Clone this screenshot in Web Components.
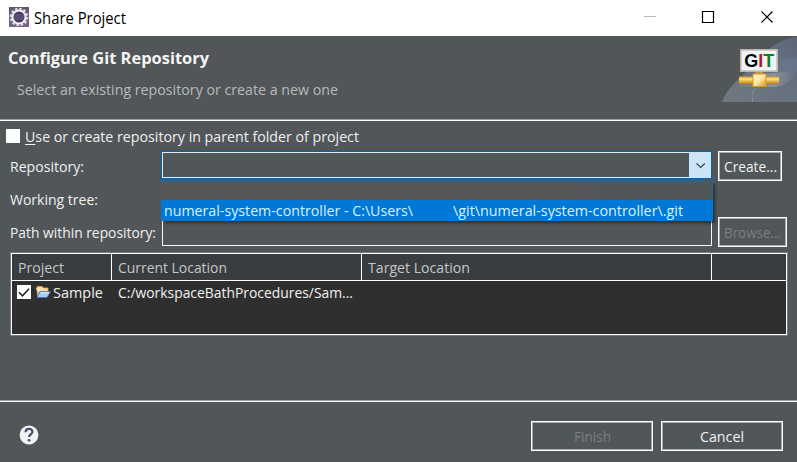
<!DOCTYPE html>
<html lang="en">
<head>
<meta charset="utf-8">
<title>Share Project</title>
<style>
html, body { margin: 0; width: 797px; height: 462px; overflow: hidden; background: #515658; }
body { font-family: "Open Sans", "Noto Sans", sans-serif; font-size: 15px; }
</style>
</head>
<body>
<share-dialog></share-dialog>
<script>
const define = (name, html, after) => {
  const t = document.createElement('template');
  t.innerHTML = html;
  customElements.define(name, class extends HTMLElement {
    connectedCallback() {
      if (this.shadowRoot) return;
      this.attachShadow({ mode: 'open' }).append(t.content.cloneNode(true));
      if (after) after(this, this.shadowRoot);
    }
  });
};

// One line of text condensed or widened to the width given in "w".
define('fit-text', `<style>
:host { display: inline-block; white-space: pre; line-height: 20px; height: 20px; flex: none; }
span { display: inline-block; transform-origin: 0 50%; }
</style><span><slot></slot></span>`, (host, root) => {
  const w = +host.getAttribute('w');
  const s = root.querySelector('span');
  const natural = s.getBoundingClientRect().width;
  host.style.width = w + 'px';
  if (natural) s.style.transform = `scaleX(${w / natural})`;
});

define('title-bar', `<style>
:host { display: flex; align-items: center; height: 36px; background: #fff; color: #000; box-sizing: border-box; padding-left: 9px; }
.app { width: 20px; height: 20px; margin: -2px 5px 0 0; }
fit-text { font-size: 15.6px; margin-top: -1px; }
.ctl { margin: 0 0 0 auto; width: 155px; height: 36px; }
</style>
<svg class="app" viewBox="0 0 20 20"><defs><linearGradient id="a" x2="0" y2="1"><stop stop-color="#625773"/><stop offset="1" stop-color="#77668d"/></linearGradient></defs>
<rect width="20" height="20" fill="url(#a)"/>
<circle cx="10" cy="10" r="8.2" fill="none" stroke="#e2e0e5" stroke-width="2.2" stroke-dasharray="2.5 1.79"/>
<circle cx="10" cy="10" r="6.5" fill="#453e62" stroke="#f1f0f3" stroke-width="2"/>
<path d="M4.8 8h10.4M4.5 10h11M4.8 12h10.4" stroke="#77718f" stroke-width=".7"/></svg>
<fit-text w="92">Share Project</fit-text>
<svg class="ctl" viewBox="0 0 155 36" fill="none"><path d="M2 16.500h12" stroke="#bbb"/><path d="M60.500 11.500h11v11h-11z" stroke="#000" stroke-width="1.200"/><path d="M119.500 11.500l11 11m0-11l-11 11" stroke="#000" stroke-width="1.200"/></svg>`);

define('git-banner', `<style>:host { display: block; width: 77px; height: 66px; } svg { display: block; }</style>
<svg width="77" height="66" viewBox="0 0 77 66"><defs>
<linearGradient id="s" x1="0" y1="1" x2="1" y2="0"><stop stop-color="#707980"/><stop offset=".6" stop-color="#667180"/><stop offset="1" stop-color="#5b6679"/></linearGradient>
<linearGradient id="g" x2="0" y2="1"><stop stop-color="#d99a21"/><stop offset=".35" stop-color="#ffe184"/><stop offset="1" stop-color="#c07b0c"/></linearGradient>
<linearGradient id="c" x2="1" y2="1"><stop stop-color="#fffbe0"/><stop offset=".5" stop-color="#fbe5a0"/><stop offset="1" stop-color="#d89519"/></linearGradient>
<linearGradient id="b" x1="0" x2="1"><stop stop-color="#8e979e" stop-opacity=".2"/><stop offset=".6" stop-color="#9aa1ab"/><stop offset="1" stop-color="#667080"/></linearGradient></defs>
<path d="M2 66C7 52 17 45 26 36C41 20 53 4 77 1V66z" fill="url(#s)"/>
<path d="M51 30Q62 22 77 22V36H51z" fill="#69768f" opacity=".7"/>
<path d="M17 51Q28 40 52 37L77 35Q69 49 57 51z" fill="url(#b)" opacity=".65"/>
<path d="M36 52q-6 4-3 14" fill="none" stroke="#8a919b" stroke-width="1"/>
<rect x="20.800" y="13.800" width="36.400" height="21.400" fill="#eef3f8" stroke="#b8b6a7" stroke-width="1.600"/>
<text x="24.300" y="30.500" font-family="Liberation Sans, sans-serif" font-weight="700" font-size="19" textLength="30" lengthAdjust="spacingAndGlyphs"><tspan fill="#080808">G</tspan><tspan fill="#b01724">I</tspan><tspan fill="#0b7d25">T</tspan></text>
<path d="M35 36h8v3h-8z" fill="#c6973a"/>
<rect x="19" y="40.500" width="40" height="7.500" fill="url(#g)"/>
<rect x="33" y="38" width="13" height="12.500" fill="url(#c)" stroke="#d39a2d" stroke-width="1"/></svg>`);

define('wizard-header', `<style>
:host { display: flex; justify-content: space-between; box-sizing: border-box; height: 85px; border-bottom: 1px solid #fff; box-shadow: inset 0 -1px #9b9e9f; }
.t { display: flex; flex-direction: column; padding: 12px 0 0 8px; gap: 11px; }
.h { color: #f4f4f4; font-weight: 700; font-size: 16px; }
.d { color: #b7babb; margin-left: 9px; }
</style>
<div class="t"><fit-text class="h" w="201">Configure Git Repository</fit-text><fit-text class="d" w="321">Select an existing repository or create a new one</fit-text></div>
<git-banner></git-banner>`);

define('push-button', `<style>
:host { display: flex; align-items: center; justify-content: center; box-sizing: border-box; height: 30px; border: 1px solid #fff; box-shadow: inset 0 0 0 1px #a9abac; color: #f2f2f2; }
:host([disabled]) { color: #7b7f81; }
</style><slot></slot>`);

define('check-box', `<style>
:host { display: block; width: 14px; height: 14px; background: #fff; flex: none; }
svg { display: none; } :host([checked]) svg { display: block; }
</style><svg width="14" height="14" viewBox="0 0 14 14"><path d="M2 7.200l3.500 3.600L12 3.700" fill="none" stroke="#222" stroke-width="1.500"/></svg>`);

define('drop-list', `<style>
:host { position: absolute; left: -1px; top: 28px; width: 552px; height: 41px; z-index: 2; display: flex; flex-direction: column; box-sizing: border-box; border-top: 1px solid #38617f; border-right: 1px solid #1769a8; background: linear-gradient(90deg, #575558 0%, #575558 70%, #515658 85%); box-shadow: 3px 3px 3px -1px rgba(20,25,28,.65); }
.e { flex: 1; }
.o { height: 21px; background: #0078d7; color: #d9f3ff; display: flex; align-items: center; padding: 0 0 1px 3px; box-sizing: border-box; margin-right: -1px; }
.a { margin-right: 40px; }
</style><div class="e"></div><div class="o"><fit-text class="a" w="249">numeral-system-controller - C:\\Users\\</fit-text><fit-text w="230">\\git\\numeral-system-controller\\.git</fit-text></div>`);

define('combo-box', `<style>
:host { position: relative; display: flex; justify-content: flex-end; box-sizing: border-box; height: 28px; border: 1px solid #0b61ab; box-shadow: inset 0 0 0 1px #dcecf8; }
.b { width: 22px; background: #cce4f7; }
svg { display: block; }
</style><div class="b"><svg width="22" height="26" viewBox="0 0 22 26"><path d="M7.500 11.300l4.200 4.200 4.200-4.200" fill="none" stroke="#333c45" stroke-width="1.200"/></svg></div><slot></slot>`);

define('repo-form', `<style>
:host { display: grid; grid-template-columns: 151px 551px 5px 69px; grid-template-rows: 30px 36px 30px; padding: 6px 0 0 10px; color: #f0f0f0; height: 96px; }
.l { align-self: center; }
.f { grid-column: 2; box-sizing: border-box; height: 29px; border: 1px solid #f7f7f7; margin-left: 1px; }
push-button { grid-column: 4; margin: 0 -1px 0 1px; }
.c { width: 64px; }
</style>
<fit-text class="l" w="74">Repository:</fit-text><combo-box><drop-list></drop-list></combo-box><push-button class="c"><fit-text w="53">Create...</fit-text></push-button>
<fit-text class="l" style="grid-column:1" w="88">Working tree:</fit-text>
<fit-text class="l" style="grid-column:1" w="146">Path within repository:</fit-text><div class="f"></div><push-button disabled><fit-text w="57">Browse...</fit-text></push-button>`);

define('project-table', `<style>
:host { display: grid; grid-template-rows: 26px 1px 1fr; box-sizing: border-box; width: 776px; height: 82px; margin: 6px 0 0 11px; border: 1px solid #fff; outline: 1px solid #777c7e; background: #2f2f2f; color: #f1f1f1; }
.h, .r { display: grid; grid-template-columns: 99px 250px 350px 1fr; }
.h { background: #393d3f; color: #c5c7c8; }
.h > div { border-left: 1px solid #fff; padding: 3px 0 0 6px; }
.h > div:first-child { border-left: 0; padding-left: 6px; }
.n { background: #fff; }
.r { padding-top: 1px; height: 20px; }
.p { display: flex; align-items: center; padding-left: 5px; }
.p svg { margin: 0 2px 0 4px; }
</style>
<div class="h"><div><fit-text w="46">Project</fit-text></div><div><fit-text w="109">Current Location</fit-text></div><div><fit-text w="102">Target Location</fit-text></div><div></div></div>
<div class="n"></div>
<div class="r"><div class="p"><check-box checked></check-box><svg width="16" height="14" viewBox="0 0 16 14"><path d="M2 4V1.500h5L8.500 3H13v3.500H5L2.500 11z" fill="#f7dfa6" stroke="#d8a654" stroke-width=".8"/><path d="M.5 3.500h4l1 2h-3z" fill="#fff2cd"/><path d="M4.800 6.800H15.500L12 12.500H2z" fill="#a8ccf5" stroke="#4672b5" stroke-width=".9"/><path d="M5.500 7.800h8.500" stroke="#e9f5ff"/></svg><fit-text w="50">Sample</fit-text></div><div style="padding-left:7px"><fit-text w="235">C:/workspaceBathProcedures/Sam...</fit-text></div></div>`);

define('dialog-footer', `<style>
:host { display: flex; align-items: center; box-sizing: border-box; height: 61px; padding: 8px 14px 0 19px; margin-top: auto; border-top: 1px solid #fff; box-shadow: 0 -1px #9b9e9f; }
push-button { width: 122px; } push-button + push-button { margin-left: 8px; }
svg { margin: -2px auto 0 0; }
</style>
<svg width="20" height="20" viewBox="0 0 20 20"><circle cx="10" cy="10" r="9.400" fill="#f1f3f7"/><path d="M6.600 7.200C6.700 2.700 13.600 3 13.400 7C13.200 9.400 10.200 9.200 10.100 12" fill="none" stroke="#4b5568" stroke-width="2.300"/><circle cx="10.100" cy="15.300" r="1.400" fill="#4b5568"/></svg>
<push-button disabled><fit-text w="37">Finish</fit-text></push-button><push-button><fit-text w="44">Cancel</fit-text></push-button>`);

define('share-dialog', `<style>
:host { display: flex; flex-direction: column; width: 797px; height: 462px; background: #515658; overflow: hidden; }
.k { display: flex; align-items: center; height: 24px; padding: 0 0 0 6px; color: #f0f0f0; margin-top: 3px; margin-bottom: -3px; }
.k fit-text { margin: -1px 0 0 5px; }
</style>
<title-bar></title-bar><wizard-header></wizard-header>
<div class="k"><check-box></check-box><fit-text w="334"><u style="text-underline-offset:2px">U</u>se or create repository in parent folder of project</fit-text></div>
<repo-form></repo-form><project-table></project-table><dialog-footer></dialog-footer>`);
</script>
</body>
</html>
